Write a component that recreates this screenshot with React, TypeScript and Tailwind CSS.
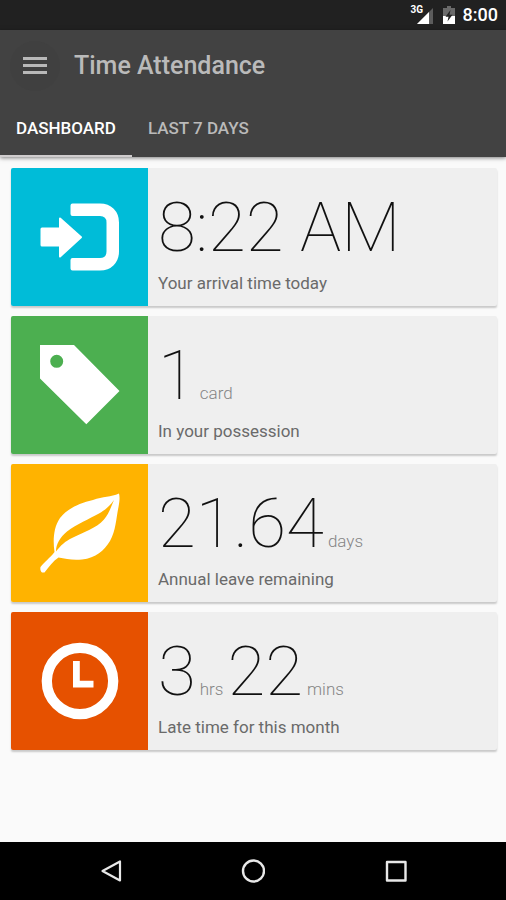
import React, { useState } from 'react';
import clsx from 'clsx';

interface Measure {
  value: string;
  unit?: string;
}

interface Stat {
  id: string;
  color: string;
  icon: React.ReactNode;
  measures: Measure[];
  label: string;
}

const ArrivalIcon = () => (
  <svg viewBox="0 0 80 80" className="size-20" fill="currentColor" stroke="currentColor" strokeLinejoin="round" aria-hidden="true">
    <path strokeWidth="2" d="M2 31.5H20V21.5L41 40.2L20 59.5V48.5H2Q1.5 48.5 1.5 48V32Q1.5 31.5 2 31.5Z" />
    <path
      strokeWidth="4"
      d="M32.5 8.5H60C70 8.5 77 15.5 77 25.5V54.5C77 64.500 70 71.5 60 71.5H32.5V63H60C65.500 63 68.5 60 68.5 54.5V25.5C68.5 20 65.500 17 60 17H32.5Z"
    />
  </svg>
);

const TagIcon = () => (
  <svg viewBox="0 0 80 80" className="size-20" fill="currentColor" aria-hidden="true">
    <path fillRule="evenodd" d="M0 0H34L79.5 46L46.3 79.3L0 33.5ZM16.7 9.8A6.5 6.5 0 1 0 16.7 22.8A6.5 6.5 0 1 0 16.7 9.8Z" />
  </svg>
);

const LeafIcon = () => (
  <svg viewBox="0 0 80 80" className="size-20" fill="currentColor" aria-hidden="true">
    <path
      fillRule="evenodd"
      d="M79 0.5C71 4 63 3.5 53 7C39 10 27 16 20 25C13 35 13 49 14.5 59C10 65 4 69 0.5 74C0 76 0.5 78.5 2 79.5H4.5C9 74 13 68 18.5 64.5C26 66 33 67.5 42 66.5C56 65 64 57.5 70 48C76 37 76 26 78.5 14C79.5 9 80 4 79 0.5ZM74 7C69 14 65 17 59 20.5C49 26 37 31 27 38.5C20 44.5 16 51 16 58.5C21 52 25 48.5 32 45C43 39.5 56 35.5 64 26.5C69 20.5 71 14 74 7Z"
    />
  </svg>
);

const ClockIcon = () => (
  <svg viewBox="0 0 80 80" className="size-20" aria-hidden="true">
    <circle cx="40" cy="40" r="33.2" fill="none" stroke="currentColor" strokeWidth="10.3" />
    <path fill="currentColor" d="M33 20H39.8V39.8H53.5V46.5H33Z" />
  </svg>
);

const stats: Stat[] = [
  { id: 'arrival', color: 'bg-[#00bcd8]', icon: <ArrivalIcon />, measures: [{ value: '8:22 AM' }], label: 'Your arrival time today' },
  { id: 'cards', color: 'bg-[#4caf50]', icon: <TagIcon />, measures: [{ value: '1', unit: 'card' }], label: 'In your possession' },
  { id: 'leave', color: 'bg-[#ffb300]', icon: <LeafIcon />, measures: [{ value: '21.64', unit: 'days' }], label: 'Annual leave remaining' },
  {
    id: 'late',
    color: 'bg-[#e65100]',
    icon: <ClockIcon />,
    measures: [{ value: '3', unit: 'hrs' }, { value: '22', unit: 'mins' }],
    label: 'Late time for this month',
  },
];

const tabs = ['Dashboard', 'Last 7 days'];

const StatusBar = () => (
  <div className="h-[30px] bg-[#212121] flex items-center justify-end pr-2 text-white">
    <div className="relative mr-2">
      <svg viewBox="0 0 24 20" className="w-6 h-5" aria-hidden="true">
        <path d="M22 3V19H6Z" fill="#5c5c5c" />
        <path d="M18 7V19H6Z" fill="#fff" />
      </svg>
      <span className="absolute left-0 top-0 text-[10px] leading-[10px] font-bold">3G</span>
    </div>
    <svg viewBox="0 0 12 20" className="w-3 h-5 mr-2" aria-hidden="true">
      <path d="M4 1H8V3H12V11H0V3H4Z" fill="#6a6a6a" />
      <path d="M0 11H12V19H0Z" fill="#fff" />
      <path d="M7.5 5L2.5 11.8H5.5L4.5 16.5L9.5 9.8H6.5Z" fill="#212121" />
    </svg>
    <span className="text-[18px] leading-6 font-medium">8:00</span>
  </div>
);

const StatCard: React.FC<{ stat: Stat }> = ({ stat }) => (
  <li className="h-[138px] flex rounded-[2px] overflow-hidden bg-[#efefef] shadow-[0_2px_2px_rgba(0,0,0,0.2)]">
    <div className={clsx('w-[137px] shrink-0 flex items-center justify-center text-white', stat.color)}>{stat.icon}</div>
    <div className="flex-1 min-w-0 pl-2.5 pt-[25px]">
      <p className="flex items-baseline gap-1 h-[70px] text-[69px] leading-[70px] font-thin text-[#111111] whitespace-nowrap">
        {stat.measures.map((m) => (
          <React.Fragment key={m.value}>
            <span>{m.value}</span>
            {m.unit && <span className="text-[17px] font-light text-[#858585]">{m.unit}</span>}
          </React.Fragment>
        ))}
      </p>
      <p className="mt-2 text-[17px] leading-6 text-[#6a6a6a]">{stat.label}</p>
    </div>
  </li>
);

const App: React.FC = () => {
  const [activeTab, setActiveTab] = useState(tabs[0]);

  return (
    <div className="min-h-screen flex flex-col bg-[#fafafa] font-[Roboto,sans-serif]">
      <StatusBar />

      <header className="bg-[#424242] shadow-[0_1px_4px_rgba(0,0,0,0.5)]">
        <div className="h-[71px] flex items-center pl-2.5 gap-[14px]">
          <button type="button" aria-label="Open menu" className="size-[50px] rounded-full bg-[#404040] flex items-center justify-center">
            <svg viewBox="0 0 24 18" className="w-6 h-[18px]" fill="#b9b9b9" aria-hidden="true">
              <path d="M0 0H24V3H0ZM0 7H24V10H0ZM0 14H24V17H0Z" />
            </svg>
          </button>
          <h1 className="text-[25px] leading-8 font-medium text-[#bababa]">Time Attendance</h1>
        </div>

        <nav className="flex h-14">
          {tabs.map((tab) => (
            <button
              key={tab}
              type="button"
              onClick={() => setActiveTab(tab)}
              className={clsx(
                'px-4 border-b-2 text-[17px] leading-6 font-medium uppercase',
                tab === activeTab ? 'text-white border-[#cfcccd]' : 'text-[#bababa] border-transparent'
              )}
            >
              {tab}
            </button>
          ))}
        </nav>
      </header>

      <main className="flex-1 pt-[11px] pl-[11px] pr-[9px] pb-4">
        <ul className="flex flex-col gap-2.5">
          {stats.map((stat) => (
            <StatCard key={stat.id} stat={stat} />
          ))}
        </ul>
      </main>

      <footer className="h-[58px] bg-black flex justify-center">
        <button type="button" aria-label="Back" className="w-[142px] flex items-center justify-center">
          <svg viewBox="0 0 24 24" className="size-6" fill="none" stroke="#e8e8e8" strokeWidth="2.2" strokeLinejoin="round" aria-hidden="true">
            <path d="M21 2.500V21.500L3.500 12Z" />
          </svg>
        </button>
        <button type="button" aria-label="Home" className="w-[142px] flex items-center justify-center">
          <svg viewBox="0 0 24 24" className="size-6" fill="none" stroke="#e8e8e8" strokeWidth="2.4" aria-hidden="true">
            <circle cx="12.5" cy="12" r="10.5" />
          </svg>
        </button>
        <button type="button" aria-label="Recent apps" className="w-[142px] flex items-center justify-center">
          <svg viewBox="0 0 24 24" className="size-6" fill="none" stroke="#e8e8e8" strokeWidth="2.4" strokeLinejoin="round" aria-hidden="true">
            <path d="M4 3H22.500V21.500H4Z" />
          </svg>
        </button>
      </footer>
    </div>
  );
};

export default App;
